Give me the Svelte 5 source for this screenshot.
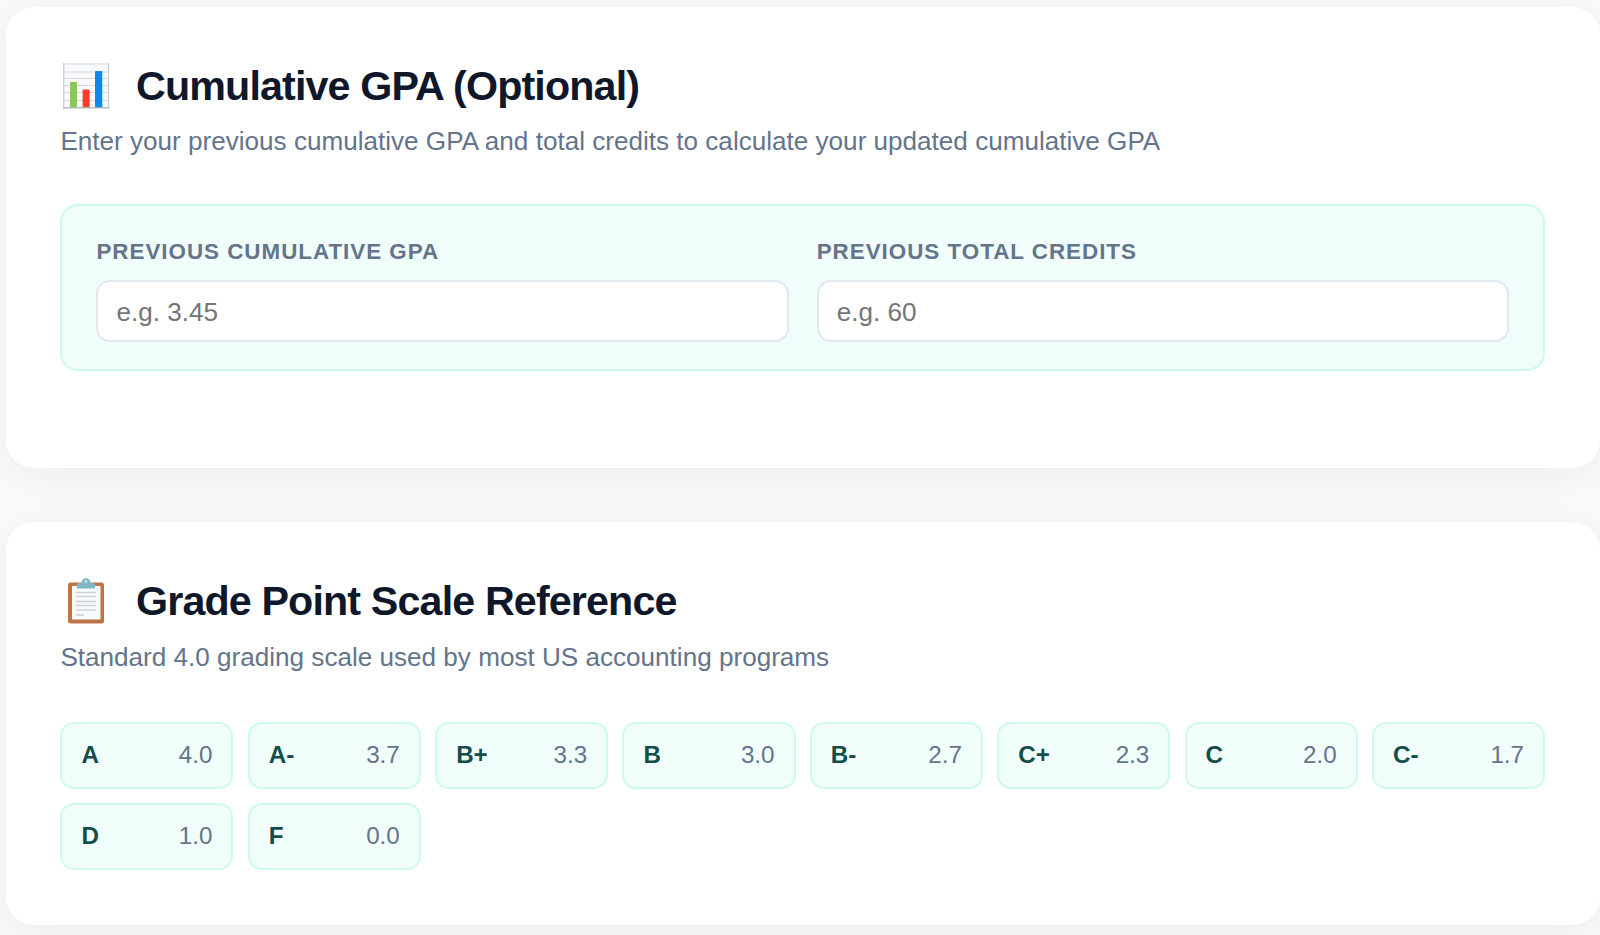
<script>
  const fields = [
    { id: 'gpa', label: 'Previous Cumulative GPA', hint: 'e.g. 3.45' },
    { id: 'credits', label: 'Previous Total Credits', hint: 'e.g. 60' },
  ];
  const grades = [
    ['A', '4.0'], ['A-', '3.7'], ['B+', '3.3'], ['B', '3.0'], ['B-', '2.7'],
    ['C+', '2.3'], ['C', '2.0'], ['C-', '1.7'], ['D', '1.0'], ['F', '0.0'],
  ];
</script>

<main>
  <section class="card first">
    <h2>
      <svg class="icon" viewBox="0 0 54 54">
        <rect x="3" y="3.4" width="46" height="45" fill="#f8fafb" />
        <path d="M3 4H49M3 12H49M3 18.5H49M3 25.5H49M3 32.5H49M3 40.5H49" stroke="#d3d9dd" stroke-width="1.2" />
        <path d="M3.7 3V48.5M48.5 3V48.5" stroke="#cdd3d7" stroke-width="1.4" />
        <path d="M3 47.800H49" stroke="#b7bec3" stroke-width="1.5" />
        <rect x="10" y="22" width="7" height="25.2" rx="1" fill="#8bc85b" />
        <rect x="22.6" y="29.5" width="7" height="17.7" rx="1" fill="#ff3b2d" />
        <rect x="35" y="11" width="7.3" height="36.2" rx="1" fill="#058bed" />
      </svg>
      <span>Cumulative GPA (Optional)</span>
    </h2>
    <p>Enter your previous cumulative GPA and total credits to calculate your updated cumulative GPA</p>
    <div class="panel">
      {#each fields as f}
        <div class="field">
          <label for={f.id}>{f.label}</label>
          <input id={f.id} placeholder={f.hint} />
        </div>
      {/each}
    </div>
  </section>

  <section class="card second">
    <h2>
      <svg class="icon" viewBox="0 0 54 54">
        <rect x="8" y="7.5" width="36" height="41" rx="2.5" fill="#bd7548" />
        <path d="M12 11H40.5V44.5H12Z" fill="#f7f9fa" />
        <path d="M16 17.5H36M16 21.5H36M16 26.5H36M16 30.5H36M16 35H36M16 40H24" stroke="#cbd3d8" stroke-width="1.3" />
        <path d="M17 13.500V9.500Q17 8 19 8H21.500Q22 3.200 26 3.200T30.500 8H33Q35 8 35 9.500V13.500Z" fill="#82b5c4" />
        <circle cx="26" cy="6.500" r="1.300" fill="#d5e5ea" />
      </svg>
      <span>Grade Point Scale Reference</span>
    </h2>
    <p>Standard 4.0 grading scale used by most US accounting programs</p>
    <div class="grades">
      {#each grades as [letter, points]}
        <div class="chip"><strong>{letter}</strong><span>{points}</span></div>
      {/each}
    </div>
  </section>
</main>

<style>
  :global(body) {
    background: #fafafa;
    overflow: hidden;
  }
  main {
    box-sizing: border-box;
    height: 935px;
    overflow: hidden;
    padding: 7px 0 0 6px;
    display: flex;
    flex-direction: column;
    gap: 54px;
    font-family: 'Liberation Sans', Arial, sans-serif;
  }
  .card {
    box-sizing: border-box;
    flex: none;
    width: 1594px;
    padding: 55px 55px 0 54.4px;
    background: #fff;
    border-radius: 28px;
    box-shadow: 0 7px 43px rgba(0, 0, 0, 0.06);
  }
  .first { height: 461px; }
  .second { height: 403px; }
  h2 {
    margin: 0;
    height: 48px;
    display: flex;
    align-items: center;
    gap: 21.6px;
    font-size: 41.25px;
    line-height: 48px;
    letter-spacing: -0.021em;
    color: #0f172a;
    white-space: nowrap;
  }
  .icon {
    width: 54px;
    height: 54px;
    flex: none;
    margin-top: 2px;
  }
  p {
    margin: 16px 0 0;
    font-size: 26.1px;
    line-height: 30px;
    color: #64748b;
    white-space: nowrap;
  }
  .second p { margin-top: 17px; }
  .panel {
    box-sizing: border-box;
    height: 167px;
    margin-top: 48px;
    padding: 33px 34px;
    border: 2px solid #ccfbec;
    border-radius: 18px;
    background: #f0fdfa;
    display: grid;
    grid-template-columns: 1fr 1fr;
    gap: 28px;
  }
  .field {
    display: flex;
    flex-direction: column;
    gap: 15px;
  }
  label {
    font-size: 22.4px;
    line-height: 26px;
    font-weight: 700;
    letter-spacing: 0.044em;
    text-transform: uppercase;
    color: #64748b;
  }
  input {
    box-sizing: border-box;
    width: 100%;
    height: 62px;
    padding: 3px 18px 0;
    border: 2px solid #e2e8f0;
    border-radius: 14px;
    background: #fff;
    font: 26.1px 'Liberation Sans', Arial, sans-serif;
  }
  input::placeholder { color: #757575; }
  .grades {
    margin-top: 50px;
    display: grid;
    grid-template-columns: repeat(8, 1fr);
    gap: 14px 14.35px;
  }
  .chip {
    box-sizing: border-box;
    height: 67px;
    padding: 0 19px 2px;
    border: 2px solid #ccfbec;
    border-radius: 14px;
    background: #f0fdfa;
    display: flex;
    align-items: center;
    justify-content: space-between;
    font-size: 24.2px;
  }
  .chip strong { color: #134e4a; }
  .chip span { color: #64748b; }
</style>
